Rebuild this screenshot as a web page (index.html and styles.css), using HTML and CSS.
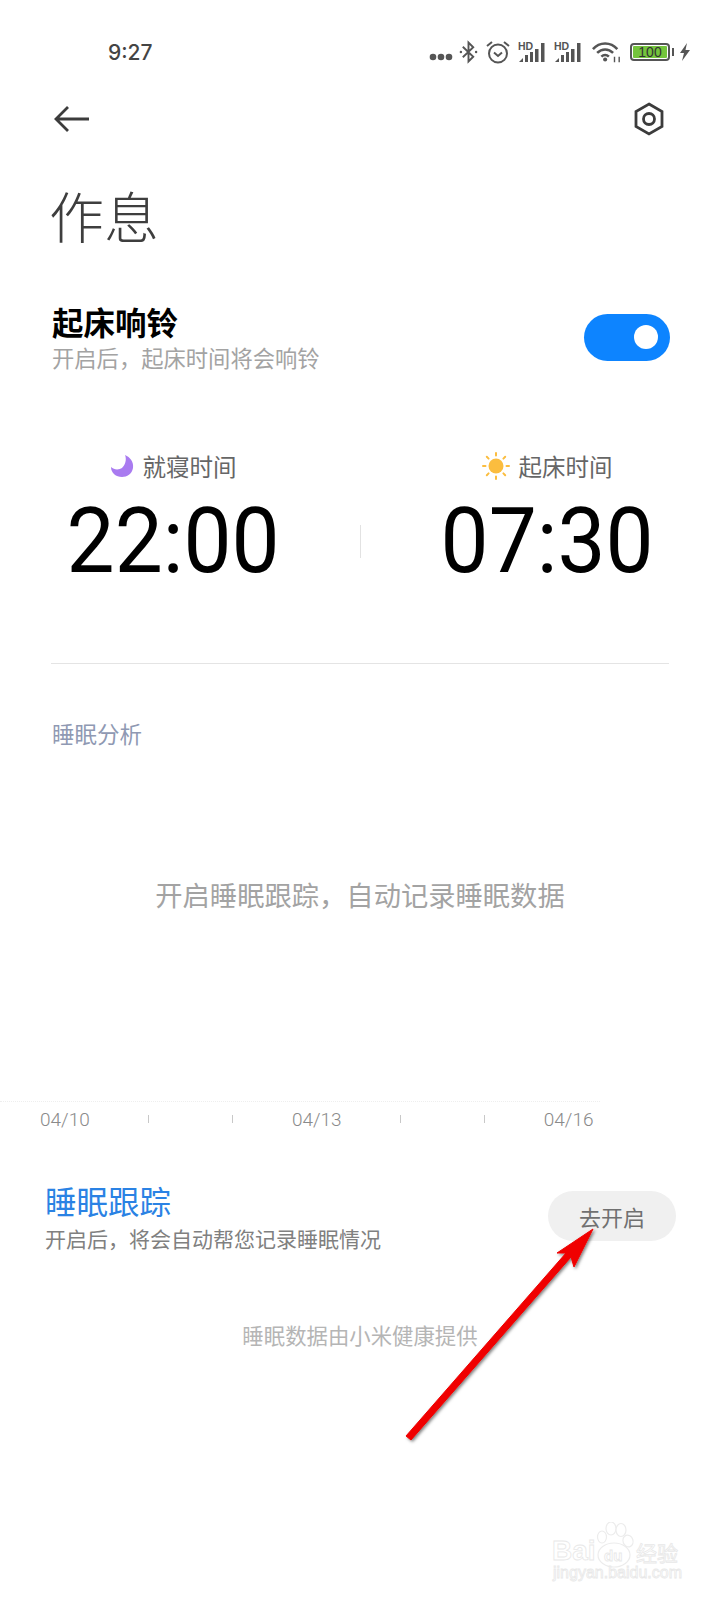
FILE: index.html
```html
<!DOCTYPE html>
<html lang="zh-CN">
<head>
    <meta charset="UTF-8">
    <meta name="viewport" content="width=device-width, initial-scale=1.0">
    <title>作息</title>
    <link rel="stylesheet" href="styles.css">
</head>
<body>
    <div class="page">
        <!-- Status bar -->
        <div class="status-bar">
            <span class="clock">9:27</span>
            <div class="status-icons">
                <svg class="dots" width="24" height="8" viewBox="0 0 24 8"><circle cx="4" cy="4" r="3.300"/><circle cx="12" cy="4" r="3.300"/><circle cx="20" cy="4" r="3.300"/></svg>
                <svg class="line bt" width="19" height="24" viewBox="0 0 20 24"><path d="M4 6.500 15 17 10 22V2l5 5L4 17.500"/><circle class="dot" cx="2" cy="12" r="1.300"/><circle class="dot" cx="18" cy="12" r="1.300"/></svg>
                <svg class="line" width="24" height="24" viewBox="0 0 24 24"><circle cx="12" cy="13.500" r="9"/><path d="M8 12.500l4 3.500 4-3.500M1 6l5-4M23 6l-5-4"/></svg>
                <svg class="signal" width="28" height="22" viewBox="0 0 28 22"><text x="0" y="9" class="hd">HD</text><path d="M1 21l4-4v4zM7 14h3v7H7zM12 11h3v10h-3zM17 8h3.500v13H17zM23 2h3.500v19H23z"/></svg>
                <svg class="signal" width="28" height="22" viewBox="0 0 28 22"><text x="0" y="9" class="hd">HD</text><path d="M1 21l4-4v4zM7 14h3v7H7zM12 11h3v10h-3zM17 8h3.500v13H17zM23 2h3.500v19H23z"/></svg>
                <svg class="line wifi" width="30" height="22" viewBox="0 0 32 22"><path d="M1 8C8 0 20 0 27 8M5.500 12c5-5 12-5 17 0M10 16c2.500-2.500 5.500-2.500 8 0"/><circle class="dot" cx="14" cy="19" r="2.200"/><path class="thin" d="M24 22v-6M29 22v-6"/></svg>
                <div class="battery"><span class="battery-level">100</span></div>
                <svg class="bolt" width="10" height="18" viewBox="0 0 10 18"><path d="M7 0 0 10h4l-2 8 8-11H5.500z"/></svg>
            </div>
        </div>

        <!-- Top nav -->
        <div class="top-nav">
            <svg class="nav-icon" width="36" height="30" viewBox="0 0 36 30"><path d="M35 15H2M14 3 2 15l12 12"/></svg>
            <svg class="nav-icon" width="30" height="34" viewBox="0 0 30 34"><path d="M15 2 28 9.500v15L15 32 2 24.500v-15z"/><circle cx="15" cy="17" r="5.500"/></svg>
        </div>

        <h1 class="page-title">作息</h1>

        <div class="alarm-row">
            <div>
                <div class="alarm-title">起床响铃</div>
                <div class="alarm-sub">开启后，起床时间将会响铃</div>
            </div>
            <div class="switch"><span class="switch-knob"></span></div>
        </div>

        <!-- Bed time / wake time -->
        <div class="times">
            <div class="time-col">
                <div class="time-label">
                    <svg width="24" height="24" viewBox="0 0 24 24"><path fill="#a97bf0" d="M15 1c5 2 9 7 8 13-1 6-6 9-11 9C6 23 1 19 1 13c3 3 8 3 11 1 3-3 5-8 3-13z"/></svg>
                    <span>就寝时间</span>
                </div>
                <div class="time-value">22:00</div>
            </div>
            <div class="time-sep"></div>
            <div class="time-col">
                <div class="time-label">
                    <svg width="28" height="28" viewBox="0 0 28 28"><circle cx="14" cy="14" r="7.500" fill="#fbbd3f"/><path stroke="#fbbd3f" stroke-width="2" stroke-linecap="round" d="M14 1v2.500M14 24.500V27M1 14h2.500M24.500 14H27M4.800 4.800l1.800 1.800M21.400 21.400l1.800 1.800M4.800 23.200l1.800-1.800M21.400 6.600l1.800-1.800"/></svg>
                    <span>起床时间</span>
                </div>
                <div class="time-value">07:30</div>
            </div>
        </div>

        <div class="divider"></div>

        <div class="section-label">睡眠分析</div>
        <div class="empty-msg">开启睡眠跟踪，自动记录睡眠数据</div>

        <!-- Chart axis -->
        <div class="axis">
            <span class="axis-date">04/10</span>
            <span class="axis-tick"></span>
            <span class="axis-tick"></span>
            <span class="axis-date">04/13</span>
            <span class="axis-tick"></span>
            <span class="axis-tick"></span>
            <span class="axis-date">04/16</span>
        </div>

        <div class="track-row">
            <div>
                <div class="track-title">睡眠跟踪</div>
                <div class="track-sub">开启后，将会自动帮您记录睡眠情况</div>
            </div>
            <button class="track-btn">去开启</button>
        </div>

        <div class="provider">睡眠数据由小米健康提供</div>

        <!-- Red annotation arrow -->
        <svg class="arrow" width="720" height="1600" viewBox="0 0 720 1600">
            <defs><filter id="arrow-shadow" x="-10%" y="-10%" width="120%" height="120%"><feDropShadow dx="1.500" dy="1.500" stdDeviation="1.500" flood-color="#000" flood-opacity="0.5"/></filter></defs>
            <path filter="url(#arrow-shadow)" fill="#f00200" stroke="#f00200" stroke-linejoin="round" d="M593 1229 574 1267 571 1257 411 1440 406 1436 566 1253 557 1253z"/>
        </svg>

        <!-- Baidu watermark -->
        <svg class="watermark" width="140" height="70" viewBox="0 0 140 70">
            <g class="paw">
                <ellipse cx="51" cy="15" rx="4.500" ry="6"/><ellipse cx="60" cy="6.500" rx="5" ry="6.500"/><ellipse cx="70" cy="8" rx="5" ry="6.500"/><ellipse cx="77" cy="19" rx="5" ry="6" transform="rotate(-20 77 19)"/>
                <ellipse cx="63" cy="33" rx="16" ry="12"/>
            </g>
            <text class="wm-big" x="1" y="38">Bai</text>
            <text class="wm-small" x="53" y="39">du</text>
            <text class="wm-cn" x="85" y="39">经验</text>
            <text class="wm-url" x="2" y="56">jingyan.baidu.com</text>
        </svg>
    </div>
</body>
</html>
```

FILE: styles.css
```css
/* Global Styles */
* {
    box-sizing: border-box;
    margin: 0;
    padding: 0;
}
body {
    font-family: "Noto Sans CJK SC", "Noto Sans", sans-serif;
    background: #fff;
}
.page {
    position: relative;
    width: 720px;
    height: 1600px;
    overflow: hidden;
    background: #fff;
}
/* Status bar */
.status-bar {
    display: flex;
    justify-content: space-between;
    align-items: center;
    height: 36px;
    margin-top: 34px;
    padding: 0 30px 0 108px;
}
.clock {
    font-family: "Inter", "Noto Sans", sans-serif;
    font-size: 21px;
    font-weight: 500;
    color: #444;
}
.status-icons {
    display: flex;
    align-items: center;
    gap: 8px;
}
.status-icons svg {
    fill: #555;
    display: block;
}
.status-icons .dots {
    margin-top: 9px;
}
.status-icons .line {
    fill: none;
    stroke: #555;
    stroke-width: 2;
}
.status-icons .dot {
    fill: #555;
    stroke: none;
}
.status-icons .thin {
    stroke-width: 1.500;
}
.status-icons .bt {
    margin-left: -2px;
}
.status-icons .wifi {
    margin-left: 2px;
    stroke-width: 2.700;
}
.status-icons .signal {
    overflow: visible;
}
.hd {
    font-family: "Liberation Sans", sans-serif;
    font-size: 10.500px;
    font-weight: 700;
}
.battery {
    width: 40px;
    height: 18px;
    border: 2px solid #555;
    border-radius: 4px;
    padding: 1px;
    position: relative;
}
.battery::after {
    content: "";
    position: absolute;
    right: -6px;
    top: 3px;
    width: 2px;
    height: 8px;
    background: #555;
}
.battery-level {
    display: block;
    height: 100%;
    background: #74c43c;
    border-radius: 1px;
    font-family: "Liberation Sans", sans-serif;
    font-size: 14px;
    line-height: 12px;
    text-align: center;
    color: #333;
}
.status-icons .bolt {
    margin-left: 2px;
}
/* Top nav */
.top-nav {
    display: flex;
    justify-content: space-between;
    align-items: center;
    height: 58px;
    margin-top: 20px;
    padding: 0 56px 0 54px;
}
.nav-icon {
    fill: none;
    stroke: #3c3c3c;
    stroke-width: 2.800;
}
.page-title {
    font-size: 55px;
    font-weight: 300;
    line-height: 64px;
    color: #3e3e3e;
    padding-left: 49px;
    margin-top: 34px;
}
/* Alarm row */
.alarm-row {
    display: flex;
    justify-content: space-between;
    align-items: center;
    padding: 0 50px 0 52px;
    margin-top: 55px;
}
.alarm-title {
    font-size: 31.500px;
    font-weight: 700;
    line-height: 40px;
    color: #000;
}
.alarm-sub {
    font-size: 22.300px;
    line-height: 32px;
    color: #a3a3a3;
}
.switch {
    display: flex;
    justify-content: flex-end;
    align-items: center;
    width: 86px;
    height: 47px;
    padding-right: 12px;
    border-radius: 24px;
    background: #0d84ff;
}
.switch-knob {
    width: 24px;
    height: 24px;
    border-radius: 50%;
    background: #fff;
}
/* Times */
.times {
    display: grid;
    grid-template-columns: 346px 28px 346px;
    align-items: center;
    margin-top: 77px;
}
.time-col {
    display: flex;
    flex-direction: column;
    align-items: center;
}
.time-label {
    display: flex;
    align-items: center;
    gap: 9px;
    font-size: 23.500px;
    line-height: 32px;
    color: #666;
}
.time-value {
    margin-top: 6px;
    font-family: "Roboto", sans-serif;
    font-size: 90px;
    line-height: 108px;
    color: #000;
    transform: scaleX(0.95);
}
.time-sep {
    justify-self: center;
    width: 1px;
    height: 33px;
    margin-top: 36px;
    background: #e2e2e2;
}
.divider {
    height: 1px;
    margin: 67px 51px 0;
    background: #e4e4e4;
}
.section-label {
    margin-top: 53px;
    padding-left: 52px;
    font-size: 22.500px;
    line-height: 32px;
    color: #8f99b3;
}
.empty-msg {
    margin-top: 125px;
    text-align: center;
    font-size: 27.300px;
    line-height: 40px;
    color: #a3a3a3;
}
/* Chart axis */
.axis {
    display: flex;
    gap: 58.600px;
    width: 600px;
    margin-top: 187px;
    padding-left: 40px;
    border-top: 1px dotted #eee;
}
.axis-date {
    font-family: "Roboto", sans-serif;
    font-size: 19px;
    font-weight: 300;
    line-height: 36px;
    color: #8a8a8a;
}
.axis-tick {
    width: 1px;
    height: 8px;
    margin-top: 13px;
    background: #c8c8c8;
}
.axis-tick + .axis-tick {
    margin-left: 24.400px;
}
/* Sleep tracking */
.track-row {
    display: flex;
    justify-content: space-between;
    align-items: center;
    padding: 0 44px 0 45px;
    margin-top: 40px;
}
.track-title {
    font-size: 31.500px;
    line-height: 44px;
    color: #2a82e4;
}
.track-sub {
    font-size: 21px;
    line-height: 32px;
    color: #808080;
}
.track-btn {
    width: 128px;
    height: 50px;
    border: none;
    border-radius: 25px;
    background: #f0f0f0;
    font-family: inherit;
    font-size: 22px;
    color: #707070;
}
.provider {
    margin-top: 65px;
    text-align: center;
    font-size: 21.400px;
    line-height: 32px;
    color: #b5b5b5;
}
/* Overlays */
.arrow {
    position: absolute;
    left: 0;
    top: 0;
    pointer-events: none;
}
.watermark {
    position: absolute;
    left: 551px;
    top: 1522px;
}
.paw {
    fill: #fff;
    stroke: #ececec;
    stroke-width: 1.200;
}
.watermark text {
    fill: #fff;
    stroke: #e8e8e8;
    stroke-width: 0.800;
}
.wm-big {
    font-family: "Liberation Sans", sans-serif;
    font-size: 28px;
    font-weight: 700;
}
.wm-small {
    font-family: "Liberation Sans", sans-serif;
    font-size: 15px;
    font-weight: 700;
}
.wm-cn {
    font-size: 21px;
}
.wm-url {
    font-family: "Liberation Sans", sans-serif;
    font-size: 16px;
}
```
